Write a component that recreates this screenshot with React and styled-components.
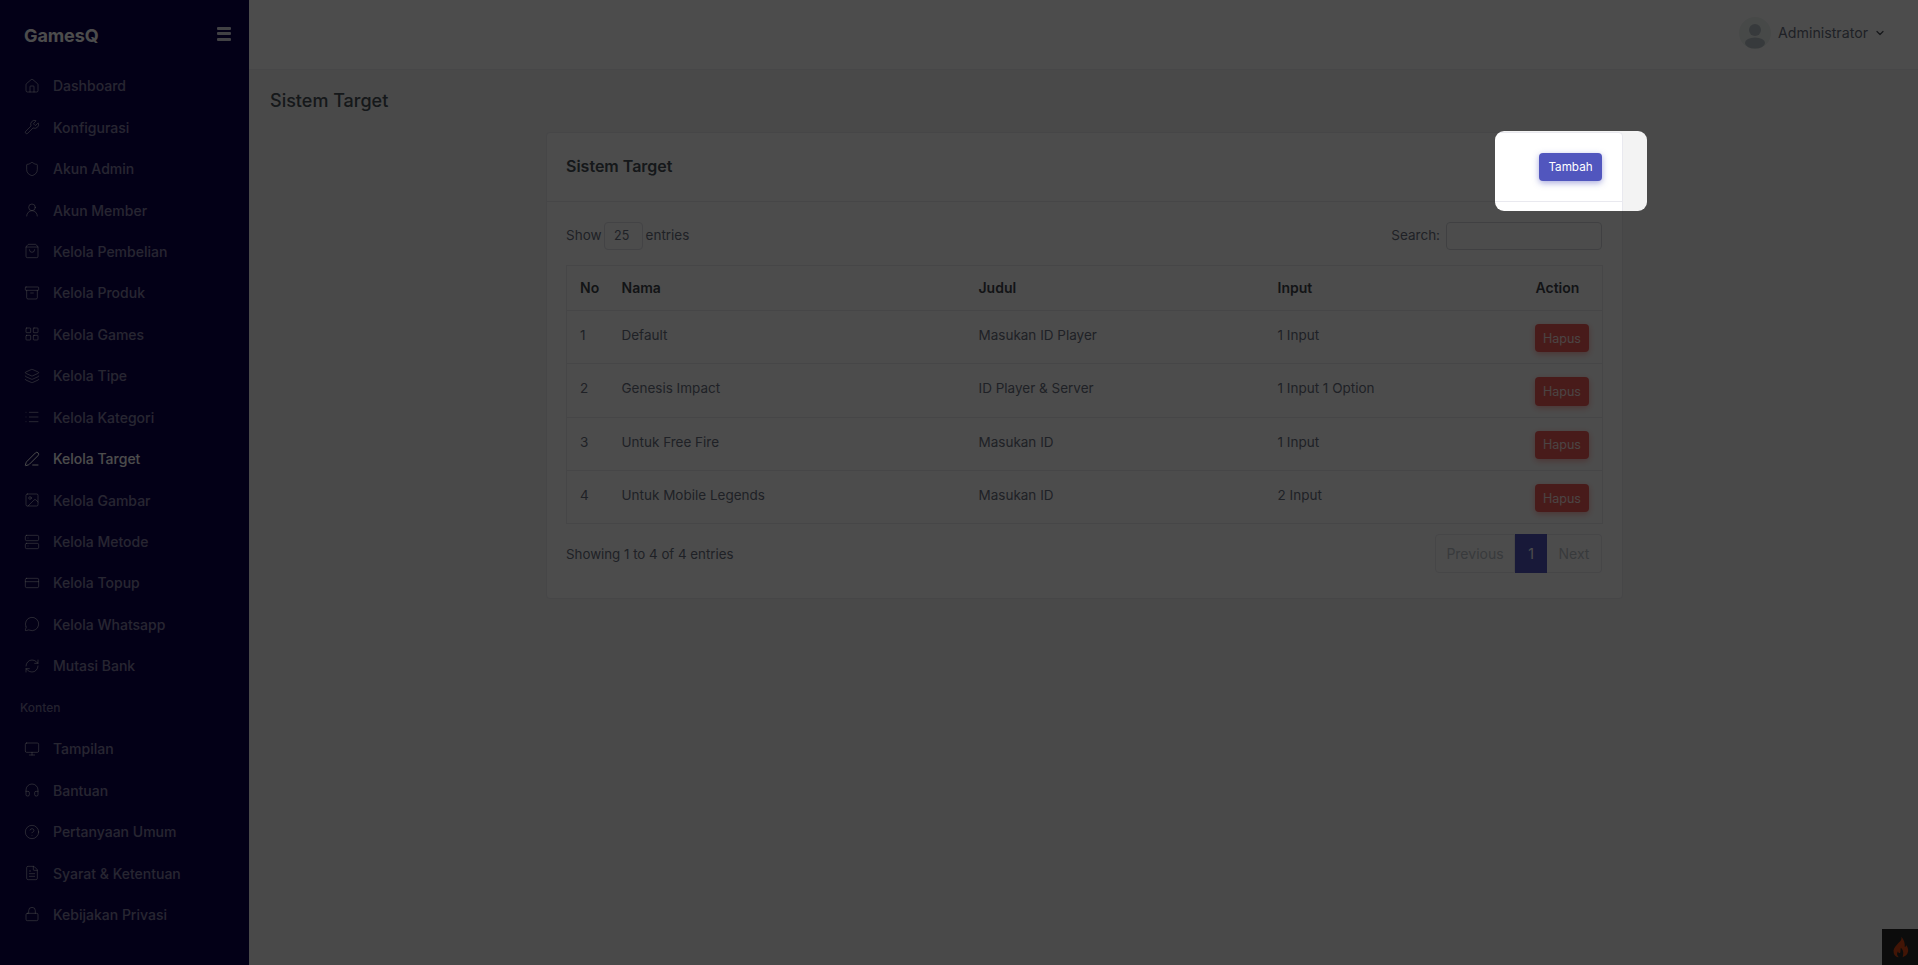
import React from "react";
import styled, { createGlobalStyle } from "styled-components";
import {
  House, Wrench, Shield, UserRound, ShoppingBag, Archive, LayoutGrid, Layers, List, PenLine,
  Image, Server, CreditCard, MessageCircle, RefreshCw, Monitor, Headphones, CircleHelp, FileText, Lock, ChevronDown,
} from "lucide-react";

const Global = createGlobalStyle`
  html, body { margin: 0; padding: 0; height: 100%; overflow: hidden; }
  body { font-family: Inter, "Liberation Sans", sans-serif; background: #f3f3f3; color: #495057; }
  * { box-sizing: border-box; }
`;

const Page = styled.div`
  display: flex;
  width: 1918px;
  height: 965px;
`;

const Sidebar = styled.aside`
  flex: 0 0 249px;
  background: #0a004d;
  display: flex;
  flex-direction: column;
`;

const Brand = styled.div`
  height: 65px;
  padding: 5px 18px 0 24px;
  display: flex;
  align-items: center;
  justify-content: space-between;
`;

const Logo = styled.span`
  font-size: 18px;
  font-weight: 700;
  color: #fff;
  letter-spacing: -0.1px;
`;

const Burger = styled.span`
  display: flex;
  flex-direction: column;
  gap: 2.5px;
  width: 14px;
  margin-top: -3px;
  & > i { display: block; height: 3px; background: #fff; border-radius: 1px; opacity: .85; }
`;

const Nav = styled.nav`
  display: flex;
  flex-direction: column;
`;

const NavItem = styled.a`
  height: 41.45px;
  padding-left: 24px;
  display: flex;
  align-items: center;
  gap: 13px;
  font-size: 14px;
  font-weight: 500;
  color: ${(p) => (p.$active ? "#fff" : "rgba(255,255,255,.5)")};
  & svg { flex: none; width: 16px; height: 16px; stroke-width: 1.5; }
`;

const NavHeading = styled.div`
  height: 41.45px;
  padding-left: 20px;
  display: flex;
  align-items: center;
  font-size: 12px;
  font-weight: 500;
  color: rgba(255,255,255,.45);
`;

const Main = styled.main`
  flex: 1;
  min-width: 0;
  display: flex;
  flex-direction: column;
`;

const Topbar = styled.header`
  height: 70px;
  background: #fff;
  border-bottom: 1px solid #eeeef2;
  display: flex;
  align-items: center;
  justify-content: flex-end;
  padding: 0 32px 4px 0;
`;

const UserMenu = styled.div`
  display: flex;
  align-items: center;
  font-size: 14.2px;
  color: #6a7080;
  & > svg:last-child { margin-left: 6px; width: 12px; height: 12px; stroke-width: 2.5; color: #495057; }
`;

const Avatar = styled.svg`
  width: 32px;
  height: 32px;
  margin-right: 7.5px;
`;

const Content = styled.div`
  flex: 1;
  padding: 18px 22px 0 24px;
`;

const PageTitle = styled.h1`
  margin: 0 0 19px -3px;
  height: 25px;
  line-height: 25px;
  font-size: 18px;
  font-weight: 500;
  color: #495057;
`;

const Card = styled.section`
  width: 1077px;
  margin: 0 auto;
  height: 467px;
  background: #fff;
  border: 1px solid #e9e9ef;
  border-radius: 4px;
`;

const CardHead = styled.div`
  height: 69px;
  padding: 0 20px 0 19px;
  border-bottom: 1px solid #e9e9ef;
  display: flex;
  align-items: center;
  justify-content: space-between;
`;

const CardTitle = styled.h2`
  margin: 0 0 2px;
  font-size: 16px;
  font-weight: 600;
  color: #495057;
`;

const Primary = styled.button`
  width: 63px;
  height: 28px;
  padding: 0;
  border: 0;
  border-radius: 4px;
  background: #5156be;
  color: #fff;
  font: 400 11.7px Inter, sans-serif;
  box-shadow: 0 2px 6px rgba(81,86,190,.5);
`;

const CardBody = styled.div`
  padding: 20px 20px 0 19px;
`;

const Tools = styled.div`
  display: flex;
  justify-content: space-between;
  align-items: flex-start;
  height: 28px;
  margin-bottom: 14.5px;
  font-size: 13.5px;
  color: #6a7080;
`;

const ToolGroup = styled.label`
  display: flex;
  align-items: flex-start;
  line-height: 26px;
  gap: ${(p) => p.$gap}px;
`;

const SelectBox = styled.span`
  width: 39px;
  height: 28px;
  padding-left: 9px;
  border: 1px solid #dfe0e6;
  border-radius: 4px;
  display: flex;
  align-items: center;
  font-size: 12.5px;
`;

const SearchBox = styled.span`
  display: block;
  width: 156px;
  height: 28px;
  margin-left: 2px;
  border: 1px solid #d5d6dd;
  border-radius: 4px;
`;

const Table = styled.table`
  width: 1036px;
  table-layout: fixed;
  border-collapse: collapse;
  border: 1px solid #e9e9ef;
  font-size: 13.5px;
`;

const Th = styled.th`
  height: 45.4px;
  padding: 0 0 0 13px;
  text-align: left;
  font-weight: 600;
  font-size: 14px;
  color: #3f454b;
  border-bottom: 1px solid #e9e9ef;
`;

const Td = styled.td`
  padding: 13px 0 0 13px;
  height: 53.4px;
  line-height: 22px;
  vertical-align: top;
  color: #6a7080;
  border-bottom: 1px solid #e9e9ef;
`;

const Danger = styled.button`
  display: block;
  width: 54px;
  height: 28.4px;
  margin-left: -0.5px;
  padding: 0;
  border: 0;
  border-radius: 4px;
  background: #f05c58;
  color: rgba(255,255,255,.85);
  font: 400 12.5px Inter, sans-serif;
  box-shadow: 0 2px 6px rgba(253,98,94,.5);
`;

const Foot = styled.div`
  display: flex;
  justify-content: space-between;
  align-items: center;
  margin-top: 9.5px;
  font-size: 13.3px;
  color: #6a7080;
`;

const FootNote = styled.span`
  padding-top: 2px;
`;

const Pager = styled.div`
  display: flex;
  height: 39px;
`;

const PageLink = styled.span`
  display: flex;
  align-items: center;
  justify-content: center;
  width: ${(p) => p.$w}px;
  font-size: 14px;
  color: ${(p) => (p.$active ? "#fff" : "#bcc3ca")};
  background: ${(p) => (p.$active ? "#5156be" : "#fff")};
  border: 1px solid ${(p) => (p.$active ? "#5156be" : "#e9e9ef")};
  border-left-width: ${(p) => (p.$first ? 1 : 0)}px;
  border-right-width: ${(p) => (p.$active ? 0 : 1)}px;
  border-radius: ${(p) => (p.$first ? "4px 0 0 4px" : p.$last ? "0 4px 4px 0" : "0")};
`;

const Spotlight = styled.div`
  position: fixed;
  left: 1495px;
  top: 131px;
  width: 152px;
  height: 80px;
  border-radius: 9px;
  box-shadow: 0 0 0 3000px rgba(0,0,0,.7);
  z-index: 20;
`;

const DebugTab = styled.div`
  position: fixed;
  right: 0;
  bottom: 0;
  width: 36px;
  height: 36px;
  background: #2a2a2a;
  display: flex;
  align-items: center;
  justify-content: center;
  z-index: 10;
`;

const nav1 = [
  [House, "Dashboard"], [Wrench, "Konfigurasi"], [Shield, "Akun Admin"], [UserRound, "Akun Member"],
  [ShoppingBag, "Kelola Pembelian"], [Archive, "Kelola Produk"], [LayoutGrid, "Kelola Games"], [Layers, "Kelola Tipe"],
  [List, "Kelola Kategori"], [PenLine, "Kelola Target", true], [Image, "Kelola Gambar"], [Server, "Kelola Metode"],
  [CreditCard, "Kelola Topup"], [MessageCircle, "Kelola Whatsapp"], [RefreshCw, "Mutasi Bank"],
];
const nav2 = [
  [Monitor, "Tampilan"], [Headphones, "Bantuan"], [CircleHelp, "Pertanyaan Umum"], [FileText, "Syarat & Ketentuan"], [Lock, "Kebijakan Privasi"],
];
const rows = [
  ["1", "Default", "Masukan ID Player", "1 Input"],
  ["2", "Genesis Impact", "ID Player & Server", "1 Input 1 Option"],
  ["3", "Untuk Free Fire", "Masukan ID", "1 Input"],
  ["4", "Untuk Mobile Legends", "Masukan ID", "2 Input"],
];

const Item = ({ icon: Icon, label, active }) => (
  <NavItem $active={active}><Icon />{label}</NavItem>
);

export default function App() {
  return (
    <Page>
      <Global />
      <Sidebar>
        <Brand>
          <Logo>GamesQ</Logo>
          <Burger><i /><i /><i /></Burger>
        </Brand>
        <Nav>
          {nav1.map(([I, l, a]) => <Item key={l} icon={I} label={l} active={a} />)}
          <NavHeading>Konten</NavHeading>
          {nav2.map(([I, l]) => <Item key={l} icon={I} label={l} />)}
        </Nav>
      </Sidebar>
      <Main>
        <Topbar>
          <UserMenu>
            <Avatar viewBox="0 0 32 32">
              <circle cx="16" cy="16" r="16" fill="#eef3f1" />
              <circle cx="16" cy="13" r="6" fill="#b8c1c8" />
              <ellipse cx="16" cy="26" rx="10" ry="5.5" fill="#b8c1c8" />
            </Avatar>
            Administrator
            <ChevronDown />
          </UserMenu>
        </Topbar>
        <Content>
          <PageTitle>Sistem Target</PageTitle>
          <Card>
            <CardHead>
              <CardTitle>Sistem Target</CardTitle>
              <Primary>Tambah</Primary>
            </CardHead>
            <CardBody>
              <Tools>
                <ToolGroup $gap={2.5}>Show <SelectBox>25</SelectBox> entries</ToolGroup>
                <ToolGroup $gap={4}>Search: <SearchBox /></ToolGroup>
              </Tools>
              <Table>
                <colgroup>
                  <col width="42" /><col width="357" /><col width="299" /><col width="258" /><col width="80" />
                </colgroup>
                <thead>
                  <tr><Th>No</Th><Th>Nama</Th><Th>Judul</Th><Th>Input</Th><Th>Action</Th></tr>
                </thead>
                <tbody>
                  {rows.map((r) => (
                    <tr key={r[0]}>
                      {r.map((c, i) => <Td key={i}>{c}</Td>)}
                      <Td><Danger>Hapus</Danger></Td>
                    </tr>
                  ))}
                </tbody>
              </Table>
              <Foot>
                <FootNote>Showing 1 to 4 of 4 entries</FootNote>
                <Pager>
                  <PageLink $w={80} $first>Previous</PageLink>
                  <PageLink $w={32} $active>1</PageLink>
                  <PageLink $w={55} $last>Next</PageLink>
                </Pager>
              </Foot>
            </CardBody>
          </Card>
        </Content>
      </Main>
      <DebugTab>
        <svg width="17" height="22" viewBox="0 0 20 26">
          <path d="M11 1c1 4-2 6-5 9-3 3-5 6-4 10 .7 3 3 5 6 5-2-2-3-4-1-7 .5 2 1.500 2.500 2.500 2 1-2 0-4 1-6 2 2 4 5 2 11 3-1 6-3 6.500-7 .5-3-1-5-2-7-.5 1-1 2-2 2 .5-4-1-9-4-12z" fill="#dd4814" />
        </svg>
      </DebugTab>
      <Spotlight />
    </Page>
  );
}
